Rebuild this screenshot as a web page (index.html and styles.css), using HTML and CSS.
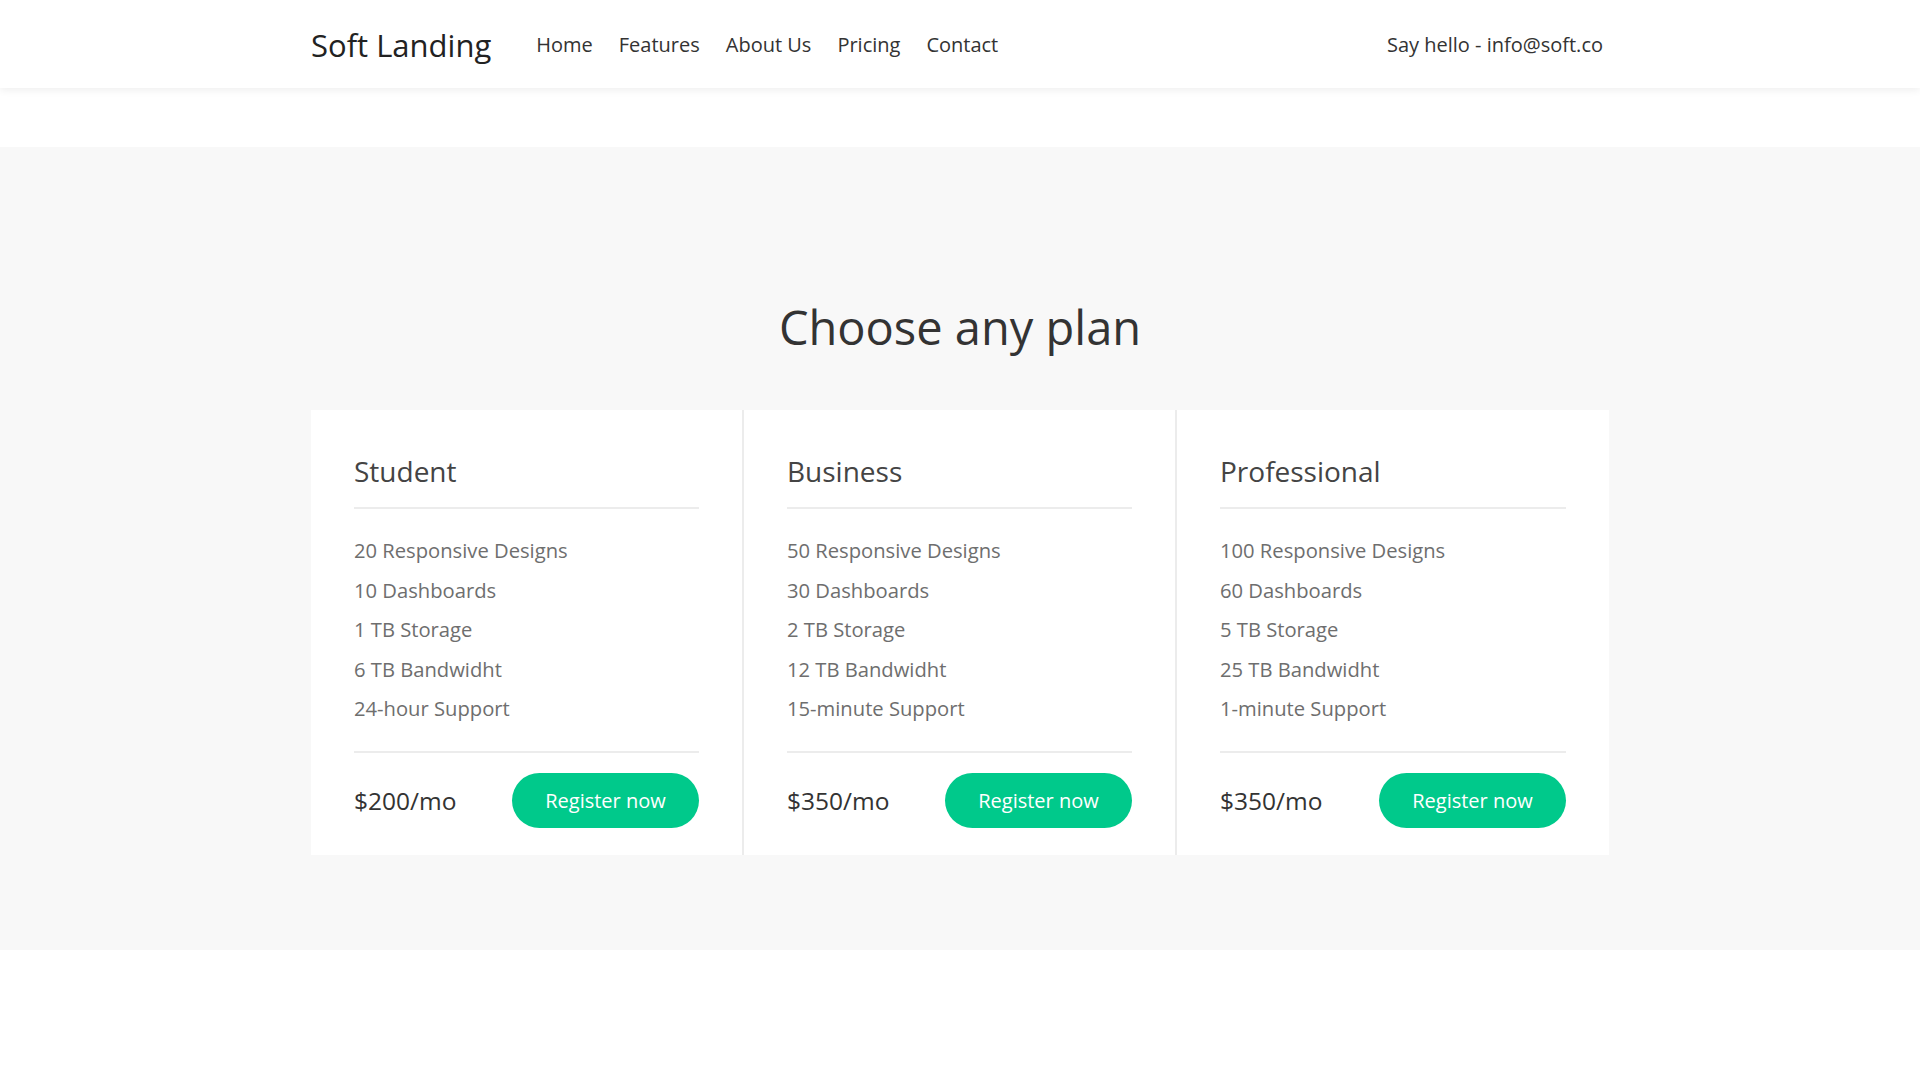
FILE: index.html
```html
<!DOCTYPE html>
<html lang="en">
<head>
<meta charset="utf-8">
<title>Soft Landing</title>
<link rel="stylesheet" href="styles.css">
</head>
<body>
<header class="site-header">
  <div class="container header-inner">
    <div class="brand">Soft Landing</div>
    <nav class="nav">
      <a href="#">Home</a>
      <a href="#">Features</a>
      <a href="#">About Us</a>
      <a href="#">Pricing</a>
      <a href="#">Contact</a>
    </nav>
    <div class="hello">Say hello - info@soft.co</div>
  </div>
</header>
<section class="pricing">
  <h1 class="pricing-title">Choose any plan</h1>
  <div class="plans">
    <div class="plan">
      <h2 class="plan-name">Student</h2>
      <ul class="plan-features">
        <li>20 Responsive Designs</li>
        <li>10 Dashboards</li>
        <li>1 TB Storage</li>
        <li>6 TB Bandwidht</li>
        <li>24-hour Support</li>
      </ul>
      <div class="plan-footer">
        <span class="price">$200/mo</span>
        <a class="btn" href="#">Register now</a>
      </div>
    </div>
    <div class="plan">
      <h2 class="plan-name">Business</h2>
      <ul class="plan-features">
        <li>50 Responsive Designs</li>
        <li>30 Dashboards</li>
        <li>2 TB Storage</li>
        <li>12 TB Bandwidht</li>
        <li>15-minute Support</li>
      </ul>
      <div class="plan-footer">
        <span class="price">$350/mo</span>
        <a class="btn" href="#">Register now</a>
      </div>
    </div>
    <div class="plan">
      <h2 class="plan-name">Professional</h2>
      <ul class="plan-features">
        <li>100 Responsive Designs</li>
        <li>60 Dashboards</li>
        <li>5 TB Storage</li>
        <li>25 TB Bandwidht</li>
        <li>1-minute Support</li>
      </ul>
      <div class="plan-footer">
        <span class="price">$350/mo</span>
        <a class="btn" href="#">Register now</a>
      </div>
    </div>
  </div>
</section>
</body>
</html>
```
FILE: styles.css
```css
* { box-sizing: border-box; }
html, body {
  margin: 0;
  padding: 0;
  background: #fff;
  font-family: "Open Sans", "Liberation Sans", sans-serif;
  color: #333;
}
.container {
  width: 1298px;
  margin: 0 auto;
}
.site-header {
  height: 88px;
  background: #fff;
  box-shadow: 0 2px 8px rgba(0, 0, 0, 0.07);
  position: relative;
  z-index: 1;
}
.header-inner {
  height: 88px;
  display: flex;
  align-items: center;
  padding: 0 6px 0 0;
}
.brand {
  font-size: 31px;
  color: #222;
  margin-right: 45px;
  padding-top: 2px;
}
.nav {
  display: flex;
  gap: 26px;
  flex: 1;
}
.nav a {
  font-size: 20px;
  color: #333;
  text-decoration: none;
}
.hello {
  font-size: 20px;
  color: #333;
}
.pricing {
  margin-top: 59px;
  background: #f8f8f8;
  padding: 153px 0 95px;
}
.pricing-title {
  margin: 0 0 55px;
  text-align: center;
  font-size: 47px;
  line-height: 55px;
  font-weight: 400;
  color: #333;
}
.plans {
  width: 1298px;
  margin: 0 auto;
  display: grid;
  grid-template-columns: 431px 433px 434px;
}
.plan {
  background: #fff;
  padding: 44px 43px 27px;
}
.plan + .plan {
  border-left: 2px solid #ececec;
}
.plan-name {
  margin: 0;
  font-size: 28px;
  line-height: 34px;
  font-weight: 400;
  color: #444;
  padding-bottom: 19px;
  border-bottom: 2px solid #ececec;
}
.plan-features {
  list-style: none;
  margin: 0;
  padding: 22px 0 22px;
  border-bottom: 2px solid #ececec;
}
.plan-features li {
  font-size: 20.2px;
  line-height: 39.5px;
  color: #6e6e6e;
}
.plan-footer {
  display: flex;
  align-items: center;
  justify-content: space-between;
  padding-top: 20px;
}
.price {
  font-size: 24.5px;
  color: #333;
}
.btn {
  display: inline-flex;
  align-items: center;
  justify-content: center;
  width: 187px;
  height: 55px;
  border-radius: 28px;
  background: #00c98b;
  color: #fff;
  font-size: 20px;
  text-decoration: none;
}
```
